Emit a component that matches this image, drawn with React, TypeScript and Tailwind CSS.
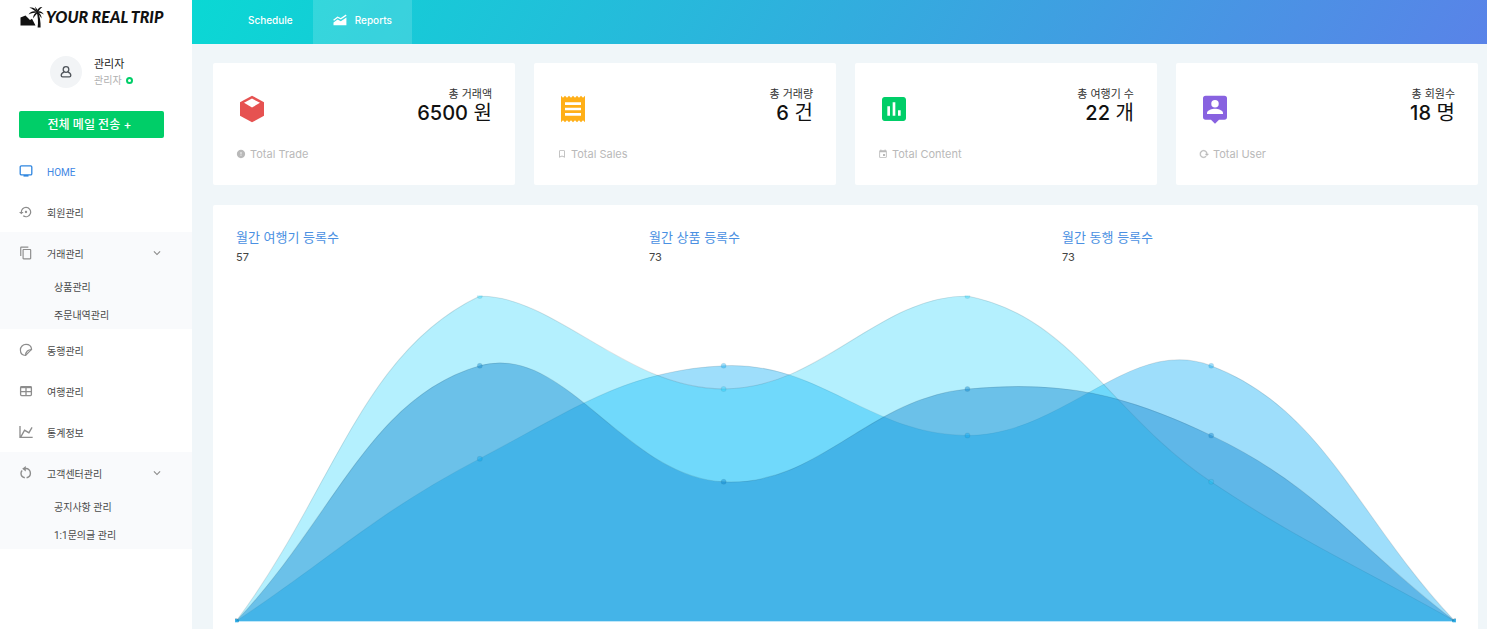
import type { ReactNode } from "react";
import {
  MdBookmarkBorder,
  MdContentCopy,
  MdError,
  MdEvent,
  MdKeyboardArrowDown,
  MdPoll,
  MdReceipt,
  MdSettingsBackupRestore,
} from "react-icons/md";

const TripLogo = () => (
  <svg viewBox="0 0 24 22" className="h-[22px] w-6 shrink-0" fill="#111" aria-hidden="true">
    <path d="M0.5 19.5V11.5L5.5 9.5L10 14L12 12.8L15.5 19.5Z" />
    <path d="M16.6 5.5C18 11 18.4 16 17.6 21.5H20.6C20.8 15.5 19.8 10 17.8 5.2Z" />
    <path d="M17 5.8C14 4.6 10.5 5.2 8.6 8.4C11.5 6.8 14.5 6.9 17 6.6Z" />
    <path d="M17 5.4C15.5 2.3 12.5 0.8 9.4 1.8C12.5 2.7 14.3 4.6 16.8 6.4Z" />
    <path d="M17 5.6C17.6 2.6 19.6 0.8 22.4 1C20.2 2.4 19.2 4.4 17.6 6.6Z" />
    <path d="M17.2 5.6C20 4.4 22.6 5.6 23.8 8.6C21.4 7 19.4 6.9 17.2 6.8Z" />
    <path d="M17.2 6C14.6 7.2 13 9.4 13.2 12.4C14.6 10 16.4 8.6 17.8 6.8Z" />
    <path d="M17.4 6C20 7.2 21.6 9.4 21.6 12.4C20.2 10 18.6 8.6 17 6.8Z" />
    <path d="M16.6 5.6L14.8 0.4L18.2 4.6Z" />
  </svg>
);

const UserIcon = () => (
  <svg viewBox="0 0 16 16" className="size-4" fill="none" stroke="#50555b" strokeWidth="1.3" aria-hidden="true">
    <circle cx="8" cy="5.5" r="2.8" />
    <path d="M6.2 8.2C4 8.8 3.2 10.2 3.2 11.6C3.2 12.5 3.7 12.9 4.6 12.9H11.4C12.3 12.9 12.8 12.5 12.8 11.6C12.8 10.2 12 8.8 9.8 8.2" />
  </svg>
);

const ScreenIcon = () => (
  <svg viewBox="0 0 14 14" className="size-3.5" aria-hidden="true">
    <rect x="1.2" y="1.9" width="11.6" height="9" rx="1.2" fill="none" stroke="currentColor" strokeWidth="1.3" />
    <rect x="4.5" y="11" width="5" height="1.6" fill="currentColor" />
  </svg>
);

const StickerIcon = () => (
  <svg viewBox="0 0 14 14" className="size-3.5" fill="none" stroke="currentColor" strokeWidth="1.2" aria-hidden="true">
    <path d="M6.6 12.5C3.4 12.3 1.4 9.9 1.4 7C1.4 3.8 3.9 1.4 7 1.4C10 1.4 12.3 3.4 12.6 6.4L6.6 12.5Z" />
    <path d="M12.5 6.6C9.2 6.6 6.6 8.6 6.7 12.3" />
  </svg>
);

const TableIcon = () => (
  <svg viewBox="0 0 14 14" className="size-3.5" aria-hidden="true">
    <rect x="1.6" y="2.6" width="10.8" height="9" rx="1" fill="none" stroke="currentColor" strokeWidth="1.3" />
    <path d="M1.6 3.2H12.4" stroke="currentColor" strokeWidth="2" />
    <path d="M1.6 7.6H12.4M7 3.4V11.6" stroke="currentColor" strokeWidth="1.3" />
  </svg>
);

const LineIcon = () => (
  <svg viewBox="0 0 24 24" className="size-4" fill="currentColor" aria-hidden="true">
    <path d="M16 11.78L20.24 4.45L21.97 5.45L16.74 14.5L10.23 10.75L5.46 19H22V21H2V3H4V17.54L9.5 8L16 11.78Z" />
  </svg>
);

const RestartIcon = () => (
  <svg viewBox="0 0 14 14" className="size-3.5" fill="none" stroke="currentColor" strokeWidth="1.4" aria-hidden="true">
    <path d="M6.2 2.6C9.4 2.2 11.4 4.4 11.4 7.2C11.4 9.6 9.8 11.2 7.6 11.7" />
    <path d="M3.2 4.4C2.4 5.2 2 6.2 2 7.2C2 9.5 3.6 11.2 5.8 11.7" />
    <path d="M6.8 0V5.4L3.2 2.7Z" fill="currentColor" stroke="none" />
  </svg>
);

const AreaIcon = () => (
  <svg viewBox="0 0 14 12" className="h-3 w-3.5" aria-hidden="true">
    <path d="M0.5 11.2V8.4L4.6 5.4L7.8 7.2L13.4 3.6V11.2Z" fill="currentColor" />
    <path d="M0.6 6.2L4.6 3.2L7.8 4.8L13.2 1.2" fill="none" stroke="currentColor" strokeWidth="1.4" />
  </svg>
);

const CubeIcon = () => (
  <svg viewBox="0 0 24 24" className="size-8" aria-hidden="true">
    <path d="M12 2L21 6.9V17.1L12 22L3 17.1V6.9Z" fill="#e65251" />
    <path d="M12 4.2L18 7.4L12 10.8L6 7.4Z" fill="#fff" />
  </svg>
);

const PersonBoxIcon = () => (
  <svg viewBox="0 0 24 24" className="size-8" aria-hidden="true">
    <path d="M5 2H19A2 2 0 0 1 21 4V18A2 2 0 0 1 19 20H15L12 23L9 20H5A2 2 0 0 1 3 18V4A2 2 0 0 1 5 2Z" fill="#8862e0" />
    <circle cx="12" cy="8" r="2.8" fill="#fff" />
    <path d="M6 15.8V15C6 13 10 11.9 12 11.9C14 11.9 18 13 18 15V15.8Z" fill="#fff" />
  </svg>
);

const ReloadIcon = () => (
  <svg viewBox="0 0 24 24" className="size-2.5" fill="currentColor" stroke="currentColor" aria-hidden="true">
    <path d="M2 12C2 16.97 6.03 21 11 21C13.39 21 15.68 20.06 17.4 18.4L15.9 16.9C14.63 18.25 12.86 19 11 19C4.76 19 1.64 11.46 6.05 7.05C10.46 2.64 18 5.77 18 12H15L19 16H19.1L23 12H20C20 7.03 15.97 3 11 3C6.03 3 2 7.03 2 12Z" />
  </svg>
);

type Item = { label: string; icon: ReactNode; active?: boolean; children?: string[] };

const menu: Item[] = [
  { label: "HOME", icon: <ScreenIcon />, active: true },
  { label: "회원관리", icon: <MdSettingsBackupRestore className="size-3.5" /> },
  { label: "거래관리", icon: <MdContentCopy className="size-3.5" />, children: ["상품관리", "주문내역관리"] },
  { label: "동행관리", icon: <StickerIcon /> },
  { label: "여행관리", icon: <TableIcon /> },
  { label: "통계정보", icon: <LineIcon /> },
  { label: "고객센터관리", icon: <RestartIcon />, children: ["공지사항 관리", "1:1문의글 관리"] },
];

const MenuItem = ({ item }: { item: Item }) => {
  const icon = <span className="flex w-4 justify-center">{item.icon}</span>;
  if (!item.children) {
    return (
      <li>
        <a
          href="#"
          className={`flex h-[41px] items-center gap-[13px] pl-[18px] ${item.active ? "text-[#2f86e0]" : "text-[#8d8d8d]"}`}
        >
          {icon}
          <span className={item.active ? "pt-1 text-[#3f87e4]" : "pt-1 text-[#4a4a4a]"}>{item.label}</span>
        </a>
      </li>
    );
  }
  return (
    <li className="bg-[#f9fafc]">
      <button
        type="button"
        aria-expanded="true"
        className="flex h-[41px] w-full items-center gap-[13px] pr-7 pl-[18px] text-left text-[#8d8d8d]"
      >
        {icon}
        <span className="flex-1 pt-1 text-[#4a4a4a]">{item.label}</span>
        <MdKeyboardArrowDown className="size-3.5" />
      </button>
      <ul>
        {item.children.map((child) => (
          <li key={child}>
            <a href="#" className="flex h-7 items-center pt-0.5 pl-[54px] text-[#4a4a4a]">
              {child}
            </a>
          </li>
        ))}
      </ul>
    </li>
  );
};

const stats = [
  { label: "총 거래액", value: "6500", unit: "원", note: "Total Trade", icon: <CubeIcon />, noteIcon: <MdError className="size-2.5" /> },
  { label: "총 거래량", value: "6", unit: "건", note: "Total Sales", icon: <MdReceipt className="size-8 text-[#ffaf17]" />, noteIcon: <MdBookmarkBorder className="size-2.5" /> },
  { label: "총 여행기 수", value: "22", unit: "개", note: "Total Content", icon: <MdPoll className="size-8 text-[#00ce68]" />, noteIcon: <MdEvent className="size-2.5" /> },
  { label: "총 회원수", value: "18", unit: "명", note: "Total User", icon: <PersonBoxIcon />, noteIcon: <ReloadIcon /> },
];

const totals = [
  { label: "월간 여행기 등록수", value: 57 },
  { label: "월간 상품 등록수", value: 73 },
  { label: "월간 동행 등록수", value: 73 },
];

const series = [
  { values: [0, 7, 11, 8, 11, 0], color: "rgb(0,168,244)", opacity: 0.38 },
  { values: [0, 14, 10, 14, 6, 0], color: "rgb(5,205,252)", opacity: 0.3 },
  { values: [0, 11, 6, 10, 8, 0], color: "rgb(12,133,207)", opacity: 0.43 },
];

const TOP = 3;
const BASE = 328;
const LEFT = 0;
const STEP = 243.6;
const TENSION = 0.4;

type Point = { x: number; y: number };

const toPoints = (values: number[]): Point[] =>
  values.map((v, i) => ({ x: LEFT + i * STEP, y: BASE - (v / 14) * (BASE - TOP) }));

const clampY = (y: number) => Math.min(BASE, Math.max(TOP, y));

// Smooth curve through the points, its handles kept inside the plot area.
const curve = (pts: Point[]) => {
  const handles = pts.map((p, i) => {
    const prev = pts[i - 1] ?? p;
    const next = pts[i + 1] ?? p;
    const d1 = Math.hypot(p.x - prev.x, p.y - prev.y);
    const d2 = Math.hypot(next.x - p.x, next.y - p.y);
    const a = (TENSION * d1) / (d1 + d2);
    const b = (TENSION * d2) / (d1 + d2);
    return {
      inX: p.x - a * (next.x - prev.x),
      inY: clampY(p.y - a * (next.y - prev.y)),
      outX: p.x + b * (next.x - prev.x),
      outY: clampY(p.y + b * (next.y - prev.y)),
    };
  });
  return pts
    .map((p, i) =>
      i === 0
        ? `M${p.x} ${p.y}`
        : `C${handles[i - 1].outX} ${handles[i - 1].outY} ${handles[i].inX} ${handles[i].inY} ${p.x} ${p.y}`,
    )
    .join("");
};

const AreaChart = () => (
  <svg viewBox="0 0 1218 330" className="mt-[26px] block h-auto w-full overflow-visible" role="img" aria-label="월간 등록수">
    <clipPath id="plot">
      <rect x="-1" y="2.5" width="1220" height="326.5" />
    </clipPath>
    <g clipPath="url(#plot)">
      {series.map((s) => {
        const d = curve(toPoints(s.values));
        return (
          <g key={s.color}>
            <path d={`${d}Z`} fill={s.color} fillOpacity={s.opacity} />
            <path d={d} fill="none" stroke="#000" strokeOpacity="0.1" />
          </g>
        );
      })}
      {series.map((s) =>
        toPoints(s.values).map((p) => (
          <circle
            key={`${s.color}${p.x}`}
            cx={p.x}
            cy={p.y}
            r="2.5"
            fill={s.color}
            fillOpacity={s.opacity}
            stroke="#000"
            strokeOpacity="0.06"
          />
        )),
      )}
    </g>
  </svg>
);

export default function App() {
  return (
    <div className="flex min-h-screen bg-[#f0f6f9] font-['Inter','Noto_Sans_CJK_KR',sans-serif]">
      <aside className="w-48 shrink-0 bg-white">
        <a href="#" className="flex h-11 items-start gap-0.5 pt-1.5 pl-5 text-[#111]">
          <TripLogo />
          <span className="font-['Lato',sans-serif] text-base leading-[22px] font-black whitespace-nowrap italic">
            YOUR REAL TRIP
          </span>
        </a>
        <div className="flex items-center gap-3 pt-3 pl-[50px]">
          <div className="flex size-8 items-center justify-center rounded-full bg-[#f2f4f6]">
            <UserIcon />
          </div>
          <div>
            <p className="text-[11px] leading-4 text-[#222]">관리자</p>
            <p className="flex items-center gap-1 text-[10px] leading-4 text-[#b0b0b0]">
              관리자
              <span className="size-[7px] rounded-full border-2 border-[#00ce68]" />
            </p>
          </div>
        </div>
        <div className="pt-[23px] pr-7 pb-3 pl-[19px]">
          <button
            type="button"
            className="block h-[27px] w-full rounded-xs bg-[#00ce68] pr-1 text-xs font-medium text-white"
          >
            전체 메일 전송 +
          </button>
        </div>
        <nav aria-label="관리 메뉴">
          <ul className="font-['Roboto','Noto_Sans_CJK_KR',sans-serif] text-[10px] leading-4">
            {menu.map((item) => (
              <MenuItem key={item.label} item={item} />
            ))}
          </ul>
        </nav>
      </aside>

      <div className="flex min-w-0 flex-1 flex-col">
        <header className="flex h-11 bg-[linear-gradient(120deg,#0ad8d4,#5983e8)] pl-9 text-[10px] font-medium text-white">
          <a href="#" className="flex items-center px-5 pb-1">
            Schedule
          </a>
          <a href="#" className="flex items-center gap-2 bg-white/15 px-5 pb-1">
            <AreaIcon />
            Reports
          </a>
        </header>

        <main className="flex flex-1 flex-col gap-5 pt-[19px] pr-[9px] pl-[21px]">
          <div className="grid grid-cols-4 gap-[19px]">
            {stats.map((s) => (
              <section key={s.note} className="rounded-xs bg-white px-[23px] pt-6 pb-[23px]">
                <div className="flex items-end justify-between">
                  {s.icon}
                  <div className="text-right">
                    <p className="text-[11px] leading-[14px] text-[#333]">{s.label}</p>
                    <p className="text-xl leading-6 text-[#111]">
                      <span className="font-medium">{s.value}</span> {s.unit}
                    </p>
                  </div>
                </div>
                <p className="mt-[21px] flex items-center gap-1 text-[11px] leading-4 text-[#b9b9b9]">
                  {s.noteIcon}
                  {s.note}
                </p>
              </section>
            ))}
          </div>

          <section className="flex-1 rounded-t-xs bg-white px-[23px] pt-6 pb-1">
            <div className="grid grid-cols-3 gap-5">
              {totals.map((t) => (
                <div key={t.label}>
                  <h2 className="text-[13px] leading-4 text-[#4a90e2]">{t.label}</h2>
                  <p className="mt-0.5 text-[11px] leading-5 text-[#444]">{t.value}</p>
                </div>
              ))}
            </div>
            <AreaChart />
          </section>
        </main>
      </div>
    </div>
  );
}
